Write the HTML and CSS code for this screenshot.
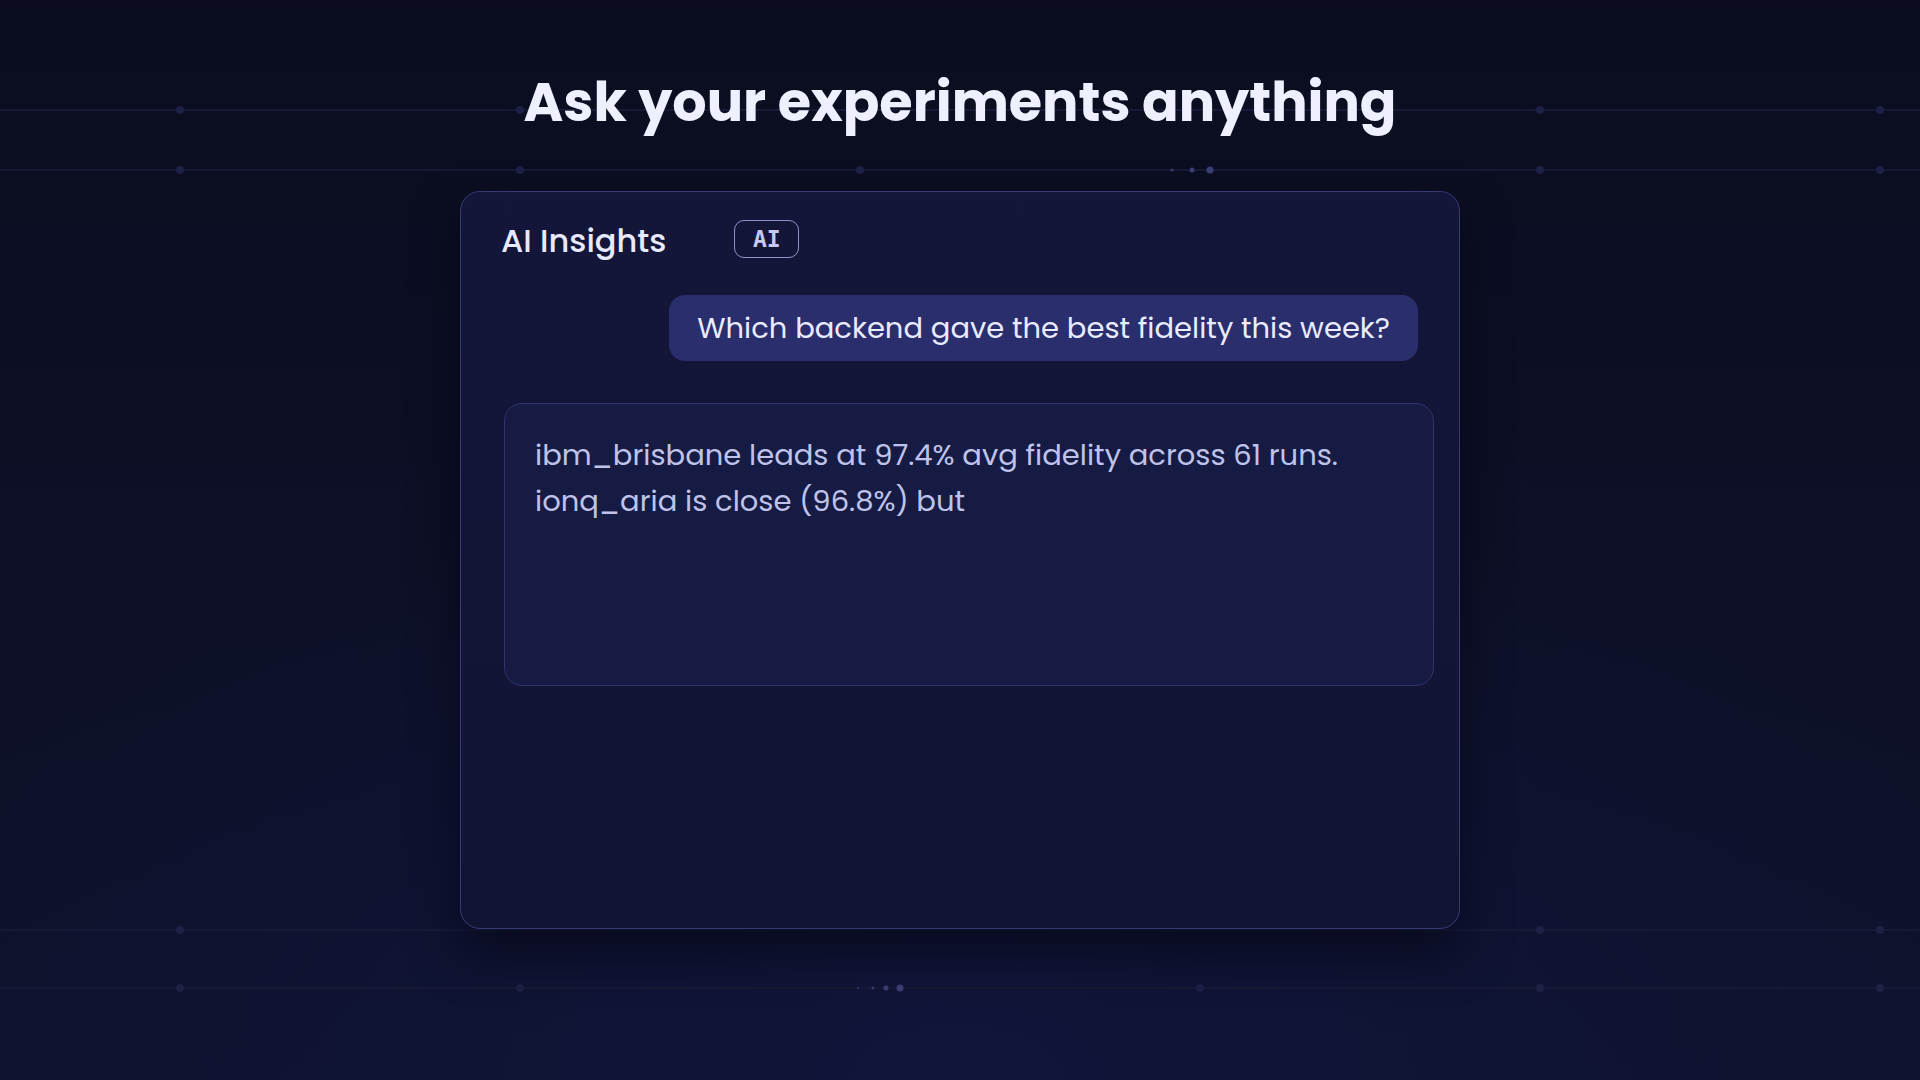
FILE: index.html
```html
<!DOCTYPE html>
<html lang="en">
<head>
    <meta charset="UTF-8">
    <meta name="viewport" content="width=device-width, initial-scale=1.0">
    <title>AI Insights</title>
    <link rel="stylesheet" href="styles.css">
</head>
<body>
  <!-- faint circuit wires behind everything -->
  <svg class="wires" width="1920" height="1080" viewBox="0 0 1920 1080" aria-hidden="true">
    <g class="wire">
      <line x1="0" y1="110" x2="1920" y2="110"></line>
      <line x1="0" y1="170" x2="1920" y2="170"></line>
      <line x1="0" y1="930" x2="1920" y2="930"></line>
      <line x1="0" y1="988" x2="1920" y2="988"></line>
    </g>
    <g class="node">
      <circle cx="180" cy="110" r="4"></circle>
      <circle cx="520" cy="110" r="4"></circle>
      <circle cx="1540" cy="110" r="4"></circle>
      <circle cx="1880" cy="110" r="4"></circle>
      <circle cx="180" cy="170" r="4"></circle>
      <circle cx="520" cy="170" r="4"></circle>
      <circle cx="860" cy="170" r="4"></circle>
      <circle cx="1540" cy="170" r="4"></circle>
      <circle cx="1880" cy="170" r="4"></circle>
      <circle cx="180" cy="930" r="4"></circle>
      <circle cx="1540" cy="930" r="4"></circle>
      <circle cx="1880" cy="930" r="4"></circle>
      <circle cx="180" cy="988" r="4"></circle>
      <circle cx="520" cy="988" r="4"></circle>
      <circle cx="1200" cy="988" r="4"></circle>
      <circle cx="1540" cy="988" r="4"></circle>
      <circle cx="1880" cy="988" r="4"></circle>
    </g>
    <g class="pulse">
      <circle cx="1172" cy="170" r="1.5"></circle>
      <circle cx="1192" cy="170" r="2.5"></circle>
      <circle cx="1210" cy="170" r="3.5"></circle>
      <circle cx="858" cy="988" r="1"></circle>
      <circle cx="873" cy="988" r="1.5"></circle>
      <circle cx="886" cy="988" r="2.5"></circle>
      <circle cx="900" cy="988" r="3.5"></circle>
    </g>
  </svg>

  <main class="stage">
    <h1 class="headline">Ask your experiments anything</h1>

    <section class="insights-card">
      <div class="card-head">
        <h2>AI Insights</h2>
        <span class="ai-badge">AI</span>
      </div>

      <div class="question">Which backend gave the best fidelity this week?</div>

      <div class="answer">
        <p>ibm_brisbane leads at 97.4% avg fidelity across 61 runs.<br>ionq_aria is close (96.8%) but</p>
      </div>
    </section>
  </main>
</body>
</html>
```

FILE: styles.css
```css
body {
  margin: 0;
  min-height: 100vh;
  overflow: hidden;
  font-family: "Poppins", "Inter", "Noto Sans", sans-serif;
  background-color: #0b0d1f;
  background-image:
    radial-gradient(ellipse 60% 55% at 50% 100%, #11153a 0%, rgba(17, 21, 58, 0) 100%),
    linear-gradient(180deg, #0b0d1f 0%, #0d1027 55%, #0e122c 100%);
}

.wires {
  position: absolute;
  top: 0;
  left: 0;
  z-index: 0;
}

.wire line {
  stroke: #161a36;
  stroke-width: 2;
}

.node circle {
  fill: #1d2146;
}

.pulse circle {
  fill: #3a3f78;
}

.stage {
  position: relative;
  z-index: 1;
  display: flex;
  flex-direction: column;
  align-items: center;
  padding-top: 70px;
}

.headline {
  margin: 0;
  font-size: 54px;
  line-height: 65px;
  font-weight: 700;
  color: #eef0ff;
}

.insights-card {
  box-sizing: border-box;
  width: 1000px;
  height: 738px;
  margin-top: 56px;
  padding: 30px 40px;
  display: flex;
  flex-direction: column;
  border: 1.5px solid #363a75;
  border-radius: 20px;
  background: linear-gradient(180deg, #131639 0%, #111433 100%);
  box-shadow: 0 24px 48px rgba(3, 4, 14, 0.55);
}

.card-head {
  display: flex;
  align-items: center;
  gap: 68px;
  height: 38px;
}

.card-head h2 {
  margin: 0;
  font-size: 32px;
  line-height: 38px;
  font-weight: 500;
  color: #e7e9fc;
}

.ai-badge {
  box-sizing: border-box;
  width: 65px;
  height: 38px;
  margin-bottom: 4px;
  display: flex;
  align-items: center;
  justify-content: center;
  border: 1.5px solid #9093c9;
  border-radius: 10px;
  font-family: "DejaVu Sans Mono", "Liberation Mono", monospace;
  font-size: 23px;
  font-weight: 700;
  color: #c7c9f0;
}

.question {
  align-self: flex-end;
  box-sizing: border-box;
  height: 66px;
  margin-top: 35px;
  margin-right: 1px;
  padding: 0 28px;
  display: flex;
  align-items: center;
  border-radius: 16px;
  background: #2b2e6d;
  font-size: 29px;
  color: #e9ebff;
}

.answer {
  box-sizing: border-box;
  width: 930px;
  height: 283px;
  margin-top: 42px;
  margin-left: 3px;
  padding: 28px 30px;
  border: 1.5px solid #2f3469;
  border-radius: 18px;
  background: #161b44;
}

.answer p {
  margin: 0;
  font-size: 29px;
  line-height: 46px;
  color: #bfc3ea;
}
```
